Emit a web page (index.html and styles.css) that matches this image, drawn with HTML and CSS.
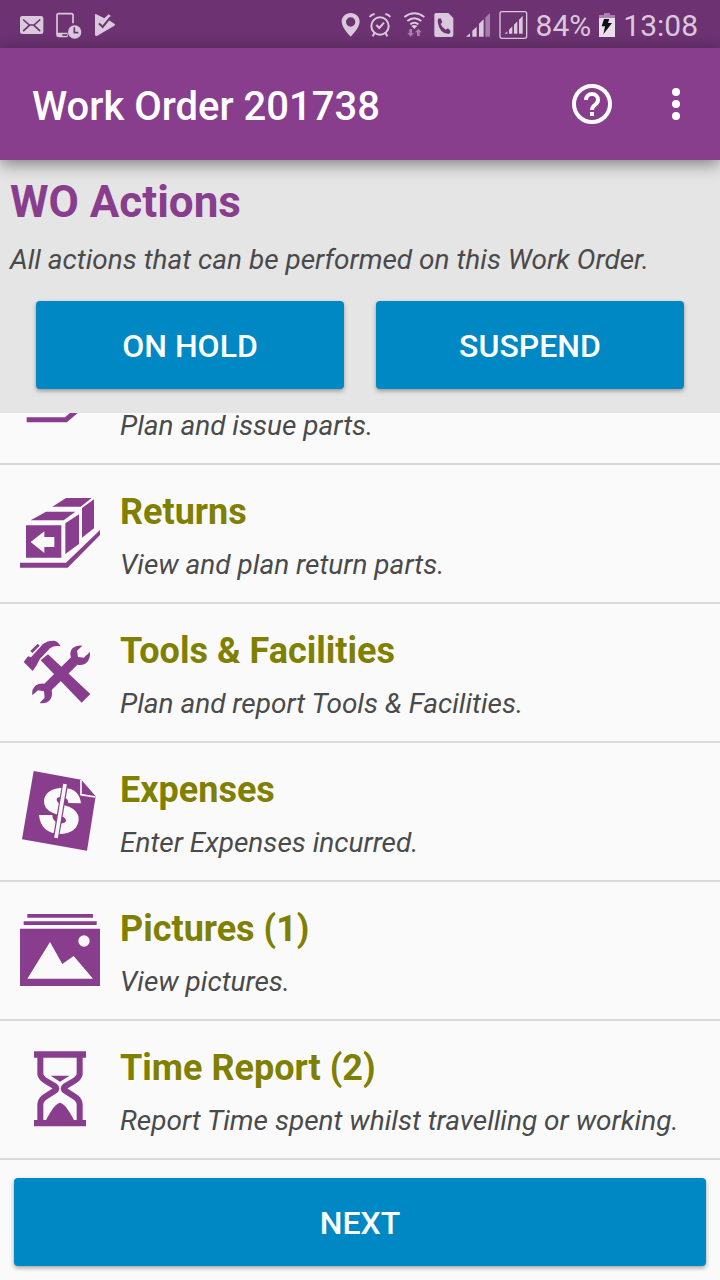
FILE: index.html
```html
<!DOCTYPE html>
<html lang="en">
<head>
<meta charset="utf-8">
<meta name="viewport" content="width=device-width, initial-scale=1">
<title>Work Order 201738</title>
<link rel="stylesheet" href="styles.css">
</head>
<body>
<div class="screen">
  <div class="status-bar">
    <div class="status-notices">
      <svg width="24" height="28" viewBox="60 33 72 84" aria-hidden="true"><rect x="60" y="48" width="70" height="54" rx="7" fill="currentColor"/><path d="M71 60l17 15h14l17-15M71 92l17-16M119 92l-17-16" fill="none" stroke="#6c3272" stroke-width="5" stroke-linecap="round"/></svg>
      <svg width="26" height="28" viewBox="167 33 78 84" aria-hidden="true"><path d="M218 70V46q0-5-5-5h-38q-5 0-5 5v59q0 4 5 4h26" fill="none" stroke="currentColor" stroke-width="5"/><path d="M170 98h32v12h-28q-4 0-4-4z" fill="currentColor"/><path d="M186 105h14" stroke="#6c3272" stroke-width="5"/><circle cx="223" cy="96" r="20" fill="currentColor"/><path d="M222 82v16h12" fill="none" stroke="#6c3272" stroke-width="5"/></svg>
      <svg width="22" height="28" viewBox="282 33 66 84" aria-hidden="true"><path d="M285 45q0-4 4-2l24 12 13-12 8 6-7 12 16 10q5 3 0 6l-51 30q-7 3-7-3z" fill="currentColor"/><path d="M297 70l11 11 25-31" fill="none" stroke="#6c3272" stroke-width="6"/></svg>
    </div>
    <div class="status-system">
      <svg width="20" height="28" viewBox="34 33 60 84" aria-hidden="true"><path fill-rule="evenodd" fill="currentColor" d="M63 39c-15 0-27 11-27 26 0 18 27 45 27 45s27-27 27-45c0-15-12-26-27-26zm0 13a14 14 0 1 1 0 28 14 14 0 0 1 0-28z"/></svg>
      <svg width="22" height="28" viewBox="116 33 66 84" aria-hidden="true"><g fill="none" stroke="currentColor" stroke-width="6"><circle cx="149" cy="78" r="26"/><path d="M138 75l9 9 14-16M118 51q5-8 15-9M180 51q-5-8-15-9M133 98l-6 11M165 98l6 11"/></g></svg>
      <svg width="27" height="28" viewBox="207 33 81 84" aria-hidden="true"><g fill="none" stroke="currentColor" stroke-width="6"><path d="M223 51q30-22 60 0M232 63q21-17 42 0M241 73q12-9 24 0"/></g><path d="M244 78q9-6 18 0l-9 9z" fill="currentColor"/><g fill="#a782aa"><path d="M238 87h8v12h6l-10 11-10-11h6z"/><path d="M261 108h8V97h6l-10-11-10 11h6z"/></g></svg>
      <svg width="20" height="28" viewBox="311 33 60 84" aria-hidden="true"><path d="M317 39h37l15 15v51q0 6-6 6h-46q-5 0-5-6V45q0-6 5-6z" fill="currentColor"/><path d="M323 58q6-6 9-2l4 10-5 7q5 11 15 16l7-4 7 7q3 5-5 10-28-2-33-37z" fill="#6c3272"/></svg>
      <svg width="29" height="28" viewBox="396 33 87 84" aria-hidden="true"><g fill="currentColor"><path d="M408 110l12-10v10zM427 92l13-12v30h-13zM447 71l14-13v52h-14z"/><path opacity=".5" d="M466 53l14-15v72h-14z"/></g></svg>
      <svg width="29" height="28" viewBox="507 33 87 84" aria-hidden="true"><rect x="510" y="35" width="80" height="80" rx="6" fill="none" stroke="currentColor" stroke-width="4"/><path fill="currentColor" d="M524 101l8-7v7zM537 89l10-10v22h-10zM552 74l10-10v37h-10zM567 59l11-11v53h-11z"/></svg>
      <span class="status-text">84%</span>
      <svg width="16" height="28" viewBox="231 33 48 84" aria-hidden="true"><path d="M231 45h15v-6h18v6h15v9h-48z" fill="#a782aa"/><path d="M231 54h48v57h-48z" fill="#eadfeb"/><path d="M246 57h16l-4 12h12l-26 34 5-24h-10z" fill="#111"/></svg>
      <span class="status-text">13:08</span>
    </div>
  </div>

  <header class="app-bar">
    <h1 class="app-title">Work Order 201738</h1>
    <button class="icon-button" type="button" aria-label="Help">
      <svg width="40" height="40" viewBox="0 0 40 40" aria-hidden="true"><circle cx="20" cy="20" r="18" fill="none" stroke="#fff" stroke-width="4"/><path d="M14 16a6 6 0 0 1 12 0c0 5-6 4.500-6 10" fill="none" stroke="#fff" stroke-width="4"/><path d="M18 28h4v4h-4z" fill="#fff"/></svg>
    </button>
    <button class="icon-button" type="button" aria-label="More options">
      <svg width="8" height="32" viewBox="0 0 8 32" fill="#fff" aria-hidden="true"><circle cx="4" cy="4" r="4"/><circle cx="4" cy="16" r="4"/><circle cx="4" cy="28" r="4"/></svg>
    </button>
  </header>

  <section class="panel">
    <h2 class="panel-title">WO Actions</h2>
    <p class="description">All actions that can be performed on this Work Order.</p>
    <div class="panel-buttons">
      <button class="button" type="button">ON HOLD</button>
      <button class="button" type="button">SUSPEND</button>
    </div>
  </section>

  <main class="list-area">
    <ul class="action-list">
      <li><a class="action" href="#parts">
        <svg class="action-icon" viewBox="60 -138 240 240" aria-hidden="true"><path d="M80 59h118L232 30" fill="none" stroke="currentColor" stroke-width="15"/></svg>
        <span class="action-text"><span class="description">Plan and issue parts.</span></span>
      </a></li>
      <li><a class="action" href="#returns">
        <svg class="action-icon" viewBox="60 279 240 240" aria-hidden="true"><g fill="currentColor"><path d="M198 294h77l-33 26h-85zM138 335h88l-35 26H92zM246 324l36-26v87l-36 28zM196 370l41-27v89l-41 30z"/><path fill-rule="evenodd" d="M78 376h106v97H78zM92 426l41 33v-18h30v-30h-30v-17z"/><path d="M60 488h138L300 390v15L203 503H60z"/></g></svg>
        <span class="action-text"><span class="action-title">Returns</span><span class="description">View and plan return parts.</span></span>
      </a></li>
      <li><a class="action" href="#tools">
        <svg class="action-icon" viewBox="60 36 240 240" aria-hidden="true"><g fill="currentColor"><path d="M71 126l13-17 9 3 36-40q14-11 34-10 13 4 19 17-20-3-32 6l-31 33-10 19-11 16z"/><path d="M91 93l22-22 6 6-22 22zM122 121l22-18 127 119-26 26z"/><path d="M247 77L231 92l3 19 17 2 19-17q2 22-12 34-11 8-26 4l-24 24-53 52q5 22-9 34-10 8-27 5l15-16-2-19-18-3-17 15q-3-19 11-30 10-7 25-5l80-79q-6-16 5-28 12-10 29-7z"/></g></svg>
        <span class="action-text"><span class="action-title">Tools &amp; Facilities</span><span class="description">Plan and report Tools &amp; Facilities.</span></span>
      </a></li>
      <li><a class="action" href="#expenses">
        <svg class="action-icon" viewBox="60 33 240 240" aria-hidden="true"><path d="M101 33l143 26 43 50-26 163L66 238z" fill="currentColor"/><path d="M243 60v44l43 7" fill="none" stroke="#fafafa" stroke-width="5"/><path fill="#fafafa" d="M191 83q47 2 52 47l-38-1q0-13-15-17-18-3-20 6 0 10 14 15l25 8q29 13 27 39-5 41-57 42-57-3-62-57h40q0 17 17 24 20 4 24-5 1-10-14-16l-25-9q-29-12-27-38 5-36 59-38z"/><path d="M195 74l-27 158" stroke="currentColor" stroke-width="18"/><path d="M195 72l-27 162" stroke="#fafafa" stroke-width="11"/></svg>
        <span class="action-text"><span class="action-title">Expenses</span><span class="description">Enter Expenses incurred.</span></span>
      </a></li>
      <li><a class="action" href="#pictures">
        <svg class="action-icon" viewBox="60 30 240 240" aria-hidden="true"><path fill="currentColor" d="M82 42h197v11H82zM71 64h219v11H71zM60 86h240v172H60z"/><path fill="#fafafa" d="M82 236l68-110 37 66 34-24 58 68z"/><circle cx="252" cy="123" r="17" fill="#fafafa"/></svg>
        <span class="action-text"><span class="action-title">Pictures (1)</span><span class="description">View pictures.</span></span>
      </a></li>
      <li><a class="action" href="#time">
        <svg class="action-icon" viewBox="60 42 240 240" aria-hidden="true"><path fill="currentColor" d="M102 49h156v19H102zM102 255h156v19H102zM152 122h57l-29 18zM137 257q27-52 43-54 16 2 43 54z"/><path d="M121 66v52q2 12 20 22l24 14q8 6 0 13l-24 15q-20 12-20 26v50M239 66v52q-2 12-20 22l-24 14q-8 6 0 13l24 15q20 12 20 26v50" fill="none" stroke="currentColor" stroke-width="18"/></svg>
        <span class="action-text"><span class="action-title">Time Report (2)</span><span class="description">Report Time spent whilst travelling or working.</span></span>
      </a></li>
    </ul>
  </main>

  <footer class="footer">
    <button class="button" type="button">NEXT</button>
  </footer>
</div>
</body>
</html>
```

FILE: styles.css
```css
* { box-sizing: border-box; }

body {
  margin: 0;
  background: #fafafa;
  color: #4a4a4a;
  font-family: Roboto, "Liberation Sans", sans-serif;
}

h1, h2, p, ul { margin: 0; padding: 0; }

button {
  border: 0;
  padding: 0;
  font-family: inherit;
  cursor: pointer;
}

svg { display: block; flex: none; }

.screen {
  display: flex;
  flex-direction: column;
  height: 100vh;
}

.status-bar {
  flex: none;
  display: flex;
  justify-content: space-between;
  align-items: center;
  height: 48px;
  padding: 2px 22px 0 20px;
  background: #6c3272;
  color: #dac9dc;
}

.status-notices, .status-system {
  display: flex;
  align-items: center;
}

.status-notices { gap: 12px; }
.status-system { gap: 8px; }

.status-text {
  padding-top: 2px;
  font-size: 30px;
  line-height: 36px;
}

.app-bar {
  flex: none;
  display: flex;
  align-items: center;
  gap: 36px;
  height: 112px;
  padding: 0 20px 0 32px;
  background: #883e8d;
  box-shadow: 0 4px 16px rgba(0, 0, 0, 0.45);
  z-index: 1;
}

.app-title {
  flex: 1;
  padding-top: 6px;
  color: #fff;
  font-size: 40px;
  font-weight: 500;
  line-height: 48px;
}

.icon-button {
  display: grid;
  place-items: center;
  width: 48px;
  height: 48px;
  background: none;
}

.panel {
  flex: none;
  padding: 16px 10px 24px;
  background: #e5e5e5;
}

.panel-title {
  margin-bottom: 15px;
  color: #883e8d;
  font-size: 44px;
  font-weight: 700;
  line-height: 52px;
}

.description {
  font-size: 28px;
  font-style: italic;
  line-height: 34px;
}

.panel-buttons {
  display: flex;
  gap: 32px;
  padding: 24px 26px 0;
}

.button {
  flex: 1;
  height: 88px;
  padding-top: 2px;
  border-radius: 4px;
  background: #0088c4;
  box-shadow: 0 2px 4px rgba(0, 0, 0, 0.35);
  color: #fff;
  font-size: 32px;
  font-weight: 500;
}

.list-area {
  flex: 1;
  min-height: 0;
  display: flex;
  flex-direction: column;
  justify-content: flex-end;
  overflow: hidden;
}

.action-list { list-style: none; }

.action {
  display: flex;
  align-items: flex-end;
  gap: 20px;
  padding: 26px 20px 20px;
  border-bottom: 2px solid #d9d9d9;
  color: inherit;
  text-decoration: none;
}

.action-icon {
  width: 80px;
  height: 80px;
  margin: 2px 0 9px;
  color: #883e8d;
}

.action-text {
  display: flex;
  flex-direction: column;
  gap: 15px;
  white-space: nowrap;
}

.action-title {
  color: #808000;
  font-size: 36px;
  font-weight: 700;
  line-height: 42px;
}

.footer {
  flex: none;
  display: flex;
  padding: 18px 14px 14px;
}
```
